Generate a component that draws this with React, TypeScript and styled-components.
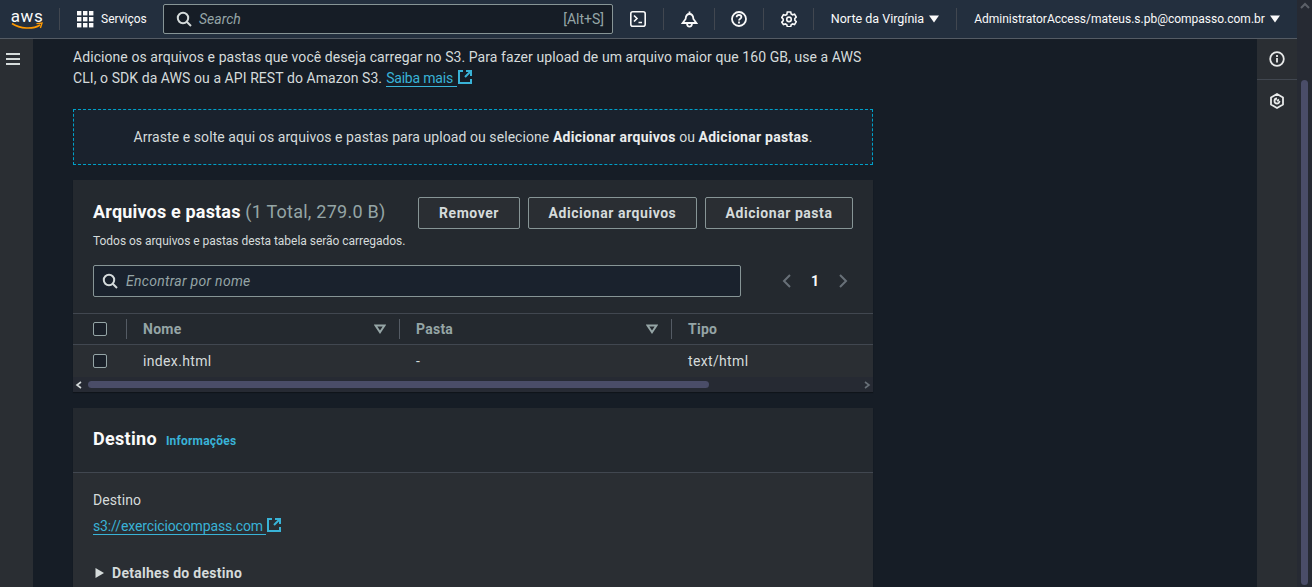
import { FC } from 'react';
import styled, { createGlobalStyle } from 'styled-components';

const GlobalStyle = createGlobalStyle`
  html, body {
    margin: 0;
    padding: 0;
    height: 100%;
    overflow: hidden;
    background: #161d26;
  }
  body {
    font-family: Roboto, "Noto Sans", sans-serif;
    font-size: 14px;
    line-height: 20px;
    letter-spacing: 0.07px;
    color: #d5dbdb;
  }
  * { box-sizing: border-box; }
`;

const ExternalIcon: FC = () => (
  <IconLink width="16" height="16" viewBox="0 0 16 16" fill="none" stroke="#39b3d7" strokeWidth="2">
    <path d="M6 2H2v12h12v-4" />
    <path d="M9 2h5v5M14 2L8 8" />
  </IconLink>
);

const SearchIcon: FC = () => (
  <svg width="16" height="16" viewBox="0 0 16 16" fill="none" stroke="#d5dbdb" strokeWidth="2">
    <circle cx="7" cy="7" r="5.2" />
    <path d="M11 11l4 4" />
  </svg>
);

const Caret: FC = () => (
  <svg width="10" height="8" viewBox="0 0 10 8" fill="#fafafa">
    <path d="M0 0.5h10L5 7.5z" />
  </svg>
);

const SortIcon: FC = () => (
  <svg width="12" height="10" viewBox="0 0 12 10" fill="none" stroke="#95a5a6" strokeWidth="2">
    <path d="M1.5 1.5h9L6 8.2z" />
  </svg>
);

const Checkbox = styled.span`
  display: block;
  width: 14px;
  height: 14px;
  border: 1px solid #95a5a6;
  border-radius: 2px;
  background: #1a2029;
`;

const App: FC = () => {
  return (
    <>
      <GlobalStyle />
      <Page>
        <Main>
          <Header>
            <Logo>
              <LogoText>aws</LogoText>
              <svg width="32" height="8" viewBox="0 0 32 8" fill="none">
                <path d="M1 1.5C9 7 22 7.5 29 3" stroke="#ff9900" strokeWidth="1.6" />
                <path d="M25.5 1.6L31 1l-1.6 5" stroke="#ff9900" strokeWidth="1.4" />
              </svg>
            </Logo>
            <HeaderDivider />
            <ServicesButton>
              <svg width="17" height="17" viewBox="0 0 17 17" fill="#fafafa">
                {[0, 6, 12].map((y) =>
                  [0, 6, 12].map((x) => <rect key={`${x}-${y}`} x={x} y={y} width="4.4" height="4.4" />)
                )}
              </svg>
              <span>Serviços</span>
            </ServicesButton>
            <GlobalSearch>
              <SearchIcon />
              <SearchPlaceholder>Search</SearchPlaceholder>
              <Shortcut>[Alt+S]</Shortcut>
            </GlobalSearch>
            <HeaderIcon $width={50}>
              <svg width="16" height="16" viewBox="0 0 16 16" fill="none" stroke="#fafafa" strokeWidth="1.6">
                <rect x="0.8" y="0.8" width="14.4" height="14.4" rx="2" />
                <path d="M4 4.500l3 3-3 3M8.500 11.500H12" />
              </svg>
            </HeaderIcon>
            <HeaderDivider />
            <HeaderIcon $width={50}>
              <svg width="17" height="17" viewBox="0 0 17 17" fill="none" stroke="#fafafa" strokeWidth="1.8">
                <path d="M8.500 0.500v2.500" />
                <path d="M4.600 8c.2-3 1.600-5 3.900-5s3.700 2 3.900 5l3 4H1.600z" />
                <path d="M6 12.500c.1 2 1.100 3.200 2.500 3.200s2.400-1.200 2.500-3.200" />
              </svg>
            </HeaderIcon>
            <HeaderDivider />
            <HeaderIcon $width={48}>
              <svg width="16" height="16" viewBox="0 0 16 16" fill="none" stroke="#fafafa" strokeWidth="1.800">
                <circle cx="8" cy="8" r="7" />
                <path d="M5.600 6.200c0-1.500 1.100-2.200 2.400-2.200s2.400.8 2.400 2c0 1.700-2.400 1.700-2.400 3.400" />
                <path d="M8 10.600v1.800" />
              </svg>
            </HeaderIcon>
            <HeaderDivider />
            <HeaderIcon $width={49}>
              <svg width="16" height="16" viewBox="0 0 17 17" fill="none" stroke="#fafafa" strokeWidth="1.7">
                <path d="M6.700 1h3.600l.5 2.100 1.500.9 2.100-.6 1.800 3.100-1.500 1.500v1.800l1.500 1.500-1.800 3.100-2.100-.6-1.500.9-.5 2.100H6.700l-.5-2.100-1.500-.9-2.100.6L.8 11.800l1.500-1.500V8.500L.8 7 2.600 3.900l2.100.6 1.500-.9z" />
                <circle cx="8.500" cy="8.900" r="2.400" />
              </svg>
            </HeaderIcon>
            <HeaderDivider />
            <HeaderMenu $width={142} $size={12.5}>
              <span>Norte da Virgínia</span>
              <Caret />
            </HeaderMenu>
            <HeaderDivider />
            <HeaderMenu $width={340} $size={12}>
              <span>AdministratorAccess/mateus.s.pb@compasso.com.br</span>
              <Caret />
            </HeaderMenu>
          </Header>
          <Body>
            <LeftRail>
              <svg width="14" height="12" viewBox="0 0 14 12" fill="none" stroke="#d5dbdb" strokeWidth="2">
                <path d="M0 1h14M0 6h14M0 11h14" />
              </svg>
            </LeftRail>
            <Content>
              <Intro>
                <IntroLine>
                  Adicione os arquivos e pastas que você deseja carregar no S3. Para fazer upload de um arquivo maior
                  que 160 GB, use a AWS
                </IntroLine>
                <IntroLine>
                  <span>CLI, o SDK da AWS ou a API REST do Amazon S3.</span>
                  <TextLink>Saiba mais</TextLink>
                  <ExternalIcon />
                </IntroLine>
              </Intro>
              <DropZone>
                <span>
                  Arraste e solte aqui os arquivos e pastas para upload ou selecione <strong>Adicionar arquivos</strong>{' '}
                  ou <strong>Adicionar pastas</strong>.
                </span>
              </DropZone>
              <FilesCard>
                <CardHeader>
                  <CardHeading>
                    <CardTitle>
                      Arquivos e pastas <Counter>(1 Total, 279.0 B)</Counter>
                    </CardTitle>
                    <CardHint>Todos os arquivos e pastas desta tabela serão carregados.</CardHint>
                  </CardHeading>
                  <Actions>
                    <Button $width={102}>Remover</Button>
                    <Button $width={169}>Adicionar arquivos</Button>
                    <Button $width={148}>Adicionar pasta</Button>
                  </Actions>
                </CardHeader>
                <FilterRow>
                  <FilterInput>
                    <SearchIcon />
                    <FilterPlaceholder>Encontrar por nome</FilterPlaceholder>
                  </FilterInput>
                  <Pagination>
                    <svg width="10" height="14" viewBox="0 0 10 14" fill="none" stroke="#687078" strokeWidth="2">
                      <path d="M8 1L2 7l6 6" />
                    </svg>
                    <PageNumber>1</PageNumber>
                    <svg width="10" height="14" viewBox="0 0 10 14" fill="none" stroke="#687078" strokeWidth="2">
                      <path d="M2 1l6 6-6 6" />
                    </svg>
                  </Pagination>
                </FilterRow>
                <HeadRow>
                  <CheckCell>
                    <Checkbox />
                  </CheckCell>
                  <HeadCell $width={273}>
                    <HeadDivider />
                    <span>Nome</span>
                    <SortIcon />
                  </HeadCell>
                  <HeadCell $width={272}>
                    <HeadDivider />
                    <span>Pasta</span>
                    <SortIcon />
                  </HeadCell>
                  <HeadCell $width={180}>
                    <HeadDivider />
                    <span>Tipo</span>
                  </HeadCell>
                </HeadRow>
                <DataRow>
                  <CheckCell>
                    <Checkbox />
                  </CheckCell>
                  <DataCell $width={273}>index.html</DataCell>
                  <DataCell $width={272}>-</DataCell>
                  <DataCell $width={180}>text/html</DataCell>
                </DataRow>
                <TableScrollbar>
                  <svg width="8" height="8" viewBox="0 0 8 8" fill="none" stroke="#d5dbdb" strokeWidth="1.600">
                    <path d="M6 1L2 4l4 3" />
                  </svg>
                  <TableThumbTrack>
                    <TableThumb />
                  </TableThumbTrack>
                  <svg width="8" height="8" viewBox="0 0 8 8" fill="none" stroke="#687078" strokeWidth="1.600">
                    <path d="M2 1l4 3-4 3" />
                  </svg>
                </TableScrollbar>
              </FilesCard>
              <DestinationCard>
                <DestinationHeader>
                  <DestinationTitle>Destino</DestinationTitle>
                  <InfoLink>Informações</InfoLink>
                </DestinationHeader>
                <DestinationBody>
                  <FieldLabel>Destino</FieldLabel>
                  <FieldValue>
                    <BucketLink>s3://exerciciocompass.com</BucketLink>
                    <ExternalIcon />
                  </FieldValue>
                  <Details>
                    <svg width="9" height="10" viewBox="0 0 9 10" fill="#d5dbdb">
                      <path d="M0.500 0v10L9 5z" />
                    </svg>
                    <span>Detalhes do destino</span>
                  </Details>
                </DestinationBody>
              </DestinationCard>
            </Content>
            <RightRail>
              <RailButton>
                <svg width="16" height="16" viewBox="0 0 16 16" fill="none" stroke="#e8eaea" strokeWidth="1.800">
                  <circle cx="8" cy="8" r="6.800" />
                  <path d="M8 7v4.500M8 4v2" />
                </svg>
              </RailButton>
              <RailButton>
                <svg width="16" height="16" viewBox="0 0 16 16" fill="none" stroke="#e8eaea" strokeWidth="1.800" strokeLinejoin="round">
                  <path d="M8 1l6 3.500v7L8 15l-6-3.500v-7z" />
                  <path d="M10.500 8A2.500 2.500 0 1 1 8 5.500M8 8l2-1.500" />
                </svg>
              </RailButton>
            </RightRail>
          </Body>
        </Main>
        <PageScrollbar>
          <svg width="10" height="8" viewBox="0 0 10 8" fill="none" stroke="#5c6068" strokeWidth="2">
            <path d="M1 6l4-4 4 4" />
          </svg>
          <PageThumb />
        </PageScrollbar>
      </Page>
    </>
  );
};

const Page = styled.div`
  display: flex;
  width: 1312px;
  height: 587px;
  overflow: hidden;
`;

const Main = styled.div`
  flex: 1;
  min-width: 0;
  display: flex;
  flex-direction: column;
`;

const Header = styled.header`
  flex: none;
  height: 39px;
  display: flex;
  align-items: center;
  padding-left: 11px;
  background: #232f3e;
  border-bottom: 1px solid #545b64;
  color: #fafafa;
  font-size: 12px;
  letter-spacing: 0;
`;

const Logo = styled.div`
  width: 32px;
  display: flex;
  flex-direction: column;
  align-items: center;
  margin-right: 16px;
  margin-top: -2px;
  svg {
    display: block;
    margin-top: -4px;
  }
`;

const LogoText = styled.span`
  font-size: 17px;
  line-height: 19px;
  font-weight: 400;
  letter-spacing: 0.5px;
`;

const HeaderDivider = styled.span`
  flex: none;
  width: 1px;
  height: 22px;
  background: #414750;
`;

const ServicesButton = styled.div`
  display: flex;
  align-items: center;
  gap: 7px;
  margin: 0 16px 0 17px;
  width: 70px;
  white-space: nowrap;
`;

const GlobalSearch = styled.div`
  flex: none;
  width: 450px;
  height: 30px;
  display: flex;
  align-items: center;
  padding: 0 8px 0 12px;
  background: #161d26;
  border: 1px solid #879596;
  border-radius: 2px;
`;

const SearchPlaceholder = styled.span`
  flex: 1;
  margin-left: 7px;
  font-size: 14px;
  font-style: italic;
  color: #95a5a6;
`;

const Shortcut = styled.span`
  font-size: 14px;
  color: #95a5a6;
`;

const HeaderIcon = styled.div<{ $width: number }>`
  flex: none;
  width: ${({ $width }) => $width}px;
  display: flex;
  justify-content: center;
  align-items: center;
`;

const HeaderMenu = styled.div<{ $width: number; $size: number }>`
  flex: none;
  width: ${({ $width }) => $width}px;
  display: flex;
  align-items: center;
  justify-content: center;
  gap: 5px;
  white-space: nowrap;
  font-size: ${({ $size }) => $size}px;
`;

const Body = styled.div`
  flex: 1;
  min-height: 0;
  display: flex;
`;

const LeftRail = styled.div`
  flex: none;
  width: 33px;
  padding: 14px 0 0 6px;
  background: #2a2e33;
  svg {
    display: block;
  }
`;

const Content = styled.main`
  flex: 1;
  padding: 8px 0 0 40px;
  min-width: 0;
  overflow: hidden;
`;

const Intro = styled.div`
  width: 800px;
  line-height: 21px;
`;

const IntroLine = styled.div`
  white-space: nowrap;
  > span {
    margin-right: 4px;
  }
`;

const TextLink = styled.a`
  padding-right: 4px;
  letter-spacing: -0.2px;
  color: #39b3d7;
  border-bottom: 1px solid #39b3d7;
`;

const BucketLink = styled(TextLink)`
  padding-right: 3px;
  letter-spacing: -0.12px;
`;

const IconLink = styled.svg`
  vertical-align: -2px;
`;

const DropZone = styled.div`
  width: 800px;
  height: 56px;
  margin-top: 20px;
  display: flex;
  align-items: center;
  justify-content: center;
  background: #1a222d;
  border: 1px dashed #00a1c9;
  strong {
    font-weight: 700;
    letter-spacing: 0.27px;
    color: #eaeded;
  }
`;

const Card = styled.section`
  width: 800px;
  background: #2a2e33;
  box-shadow: 0 1px 1px rgba(0, 0, 0, 0.3);
`;

const FilesCard = styled(Card)`
  margin-top: 15px;
  background: #24292f;
`;

const CardHeader = styled.div`
  display: flex;
  justify-content: space-between;
  padding: 17px 20px 0;
  height: 85px;
`;

const CardHeading = styled.div`
  padding-top: 1px;
`;

const CardTitle = styled.h2`
  margin: 0;
  font-size: 18px;
  line-height: 28px;
  font-weight: 700;
  letter-spacing: 0.18px;
  color: #fafafa;
`;

const Counter = styled.span`
  font-weight: 400;
  letter-spacing: 0.25px;
  color: #95a5a6;
`;

const CardHint = styled.div`
  margin-top: 7px;
  font-size: 12px;
  line-height: 16px;
  letter-spacing: -0.03px;
  color: #d5dbdb;
`;

const Actions = styled.div`
  display: flex;
  gap: 8px;
`;

const Button = styled.button<{ $width: number }>`
  width: ${({ $width }) => $width}px;
  height: 32px;
  padding: 0;
  background: #2a2e33;
  border: 1px solid #879596;
  border-radius: 2px;
  color: #d5dbdb;
  font: 700 14px/20px Roboto, sans-serif;
  letter-spacing: 0.55px;
`;

const FilterRow = styled.div`
  display: flex;
  align-items: center;
  padding: 0 20px;
  height: 32px;
`;

const FilterInput = styled.div`
  width: 648px;
  height: 32px;
  display: flex;
  align-items: center;
  gap: 8px;
  padding: 0 8px;
  background: #1a222d;
  border: 1px solid #879596;
  border-radius: 2px;
`;

const FilterPlaceholder = styled.span`
  font-style: italic;
  letter-spacing: 0.28px;
  color: #95a5a6;
`;

const Pagination = styled.div`
  margin-left: 41px;
  display: flex;
  align-items: center;
  gap: 19px;
`;

const PageNumber = styled.span`
  font-weight: 700;
  color: #fafafa;
`;

const HeadRow = styled.div`
  display: flex;
  height: 32px;
  margin-top: 16px;
  border-top: 1px solid #414750;
  border-bottom: 1px solid #414750;
  align-items: center;
`;

const CheckCell = styled.div`
  flex: none;
  width: 53px;
  padding-left: 20px;
`;

const HeadCell = styled.div<{ $width: number }>`
  flex: none;
  width: ${({ $width }) => $width}px;
  display: flex;
  align-items: center;
  height: 20px;
  padding-right: 13px;
  font-weight: 700;
  letter-spacing: 0.25px;
  color: #95a5a6;
  span:not(:empty) {
    flex: 1;
    padding-left: 16px;
  }
`;

const HeadDivider = styled.span`
  flex: none;
  width: 1px;
  height: 20px;
  background: #545b64;
`;

const DataRow = styled.div`
  display: flex;
  align-items: center;
  height: 32px;
  background: #2a2e33;
`;

const DataCell = styled.div<{ $width: number }>`
  flex: none;
  width: ${({ $width }) => $width}px;
  padding-left: 17px;
  letter-spacing: 0.35px;
`;

const TableScrollbar = styled.div`
  height: 15px;
  display: flex;
  align-items: center;
  gap: 5px;
  padding: 0 2px;
  background: #262a33;
  svg:last-child {
    margin-left: -2px;
  }
`;

const TableThumbTrack = styled.div`
  flex: 1;
`;

const TableThumb = styled.div`
  width: 621px;
  height: 7px;
  border-radius: 4px;
  background: #4a4d68;
`;

const DestinationCard = styled(Card)`
  margin-top: 16px;
`;

const DestinationHeader = styled.div`
  height: 65px;
  padding: 0 0 2px 20px;
  display: flex;
  align-items: center;
  gap: 9px;
  background: #24292f;
  border-bottom: 1px solid #414750;
`;

const DestinationTitle = styled.h2`
  margin: 0;
  font-size: 18px;
  font-weight: 700;
  letter-spacing: 0.3px;
  color: #fafafa;
`;

const InfoLink = styled.a`
  font-size: 12px;
  font-weight: 700;
  letter-spacing: 0.2px;
  color: #39b3d7;
  margin-top: 3px;
`;

const DestinationBody = styled.div`
  padding: 17px 20px 20px;
`;

const FieldLabel = styled.div`
  line-height: 20px;
`;

const FieldValue = styled.div`
  margin-top: 6px;
  line-height: 20px;
`;

const Details = styled.div`
  margin-top: 27px;
  display: flex;
  align-items: center;
  gap: 8px;
  padding-left: 2px;
  font-weight: 700;
  letter-spacing: 0.28px;
`;

const RightRail = styled.aside`
  flex: none;
  width: 40px;
  background: #2a2e33;
`;

const RailButton = styled.div`
  height: 41px;
  display: flex;
  align-items: center;
  justify-content: center;
  &:first-child {
    border-bottom: 1px solid #414750;
  }
`;

const PageScrollbar = styled.div`
  flex: none;
  width: 15px;
  display: flex;
  flex-direction: column;
  align-items: center;
  padding-top: 2px;
  background: #262a33;
`;

const PageThumb = styled.div`
  width: 7px;
  height: 505px;
  margin-top: 70px;
  border-radius: 4px;
  background: #4a4d68;
`;

export default App;
